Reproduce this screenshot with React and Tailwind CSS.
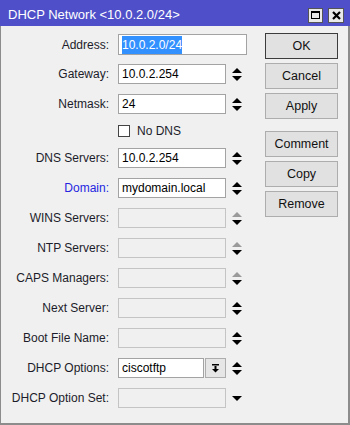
import React from 'react';

const UpDown = ({ up = 'on', down = 'on' }) => {
  const color = (s) => (s === 'dim' ? '#9a9a9a' : '#000');
  if (up && down) {
    return (
      <svg width="10" height="13" viewBox="0 0 10 13">
        <polygon points="0,5 5,0 10,5" fill={color(up)} />
        <polygon points="0,8 5,13 10,8" fill={color(down)} />
      </svg>
    );
  }
  if (up) {
    return (
      <svg width="10" height="5" viewBox="0 0 10 5">
        <polygon points="0,5 5,0 10,5" fill={color(up)} />
      </svg>
    );
  }
  return (
    <svg width="10" height="5" viewBox="0 0 10 5">
      <polygon points="0,0 5,5 10,0" fill={color(down)} />
    </svg>
  );
};

const fields = [
  { label: 'Gateway:', value: '10.0.2.254', up: 'on', down: 'on' },
  { label: 'Netmask:', value: '24', up: 'on' },
];

const lower = [
  { label: 'DNS Servers:', value: '10.0.2.254', up: 'on', down: 'on' },
  { label: 'Domain:', value: 'mydomain.local', up: 'on', blue: true },
  { label: 'WINS Servers:', disabled: true, up: 'dim', down: 'on' },
  { label: 'NTP Servers:', disabled: true, up: 'dim', down: 'on' },
  { label: 'CAPS Managers:', disabled: true, up: 'dim', down: 'on' },
  { label: 'Next Server:', disabled: true, down: 'on' },
  { label: 'Boot File Name:', disabled: true, down: 'on' },
];

const Label = ({ children, blue }) => (
  <div className={`w-[109px] text-right pr-[1px] ${blue ? 'text-[#2525e0]' : 'text-[#1c1c2a]'}`}>{children}</div>
);

const Row = ({ f }) => (
  <div className="flex items-center h-[20px] mb-[10px]">
    <Label blue={f.blue}>{f.label}</Label>
    <div
      className={`ml-[8px] w-[108px] h-[20px] border flex items-center px-[3px] ${
        f.disabled ? 'bg-[#f0f0f0] border-[#c4c4c4]' : 'bg-white border-[#a3a3a3]'
      }`}
    >
      {f.value}
    </div>
    <div className="ml-[6px] w-[10px] flex items-center justify-center">
      <UpDown up={f.up} down={f.down} />
    </div>
  </div>
);

const Btn = ({ children, primary, className = '' }) => (
  <button
    className={`w-[73px] h-[26px] bg-[#e1e1e1] border text-[12.5px] text-[#111] ${
      primary ? 'border-[#3c3c3c]' : 'border-[#adadad]'
    } ${className}`}
  >
    {children}
  </button>
);

export default function App() {
  return (
    <div className="w-[350px] h-[425px] flex flex-col text-[12px] font-['Liberation_Sans',Arial,sans-serif] bg-[#4f4fc9]">
      <div className="h-[26px] flex items-center pl-[8px] pr-[6px] pt-[4px] text-white">
        <span className="text-[13px]">DHCP Network &lt;10.0.2.0/24&gt;</span>
        <div className="ml-auto flex gap-[5px]">
          <div className="w-[15px] h-[15px] bg-[#eaeaea] border border-[#555] flex items-center justify-center">
            <div className="w-[9px] h-[8px] border border-black border-t-2" />
          </div>
          <div className="w-[16px] h-[15px] bg-[#eaeaea] border border-[#555] flex items-center justify-center">
            <svg width="9" height="9" viewBox="0 0 9 9">
              <path d="M1 1 L8 8 M8 1 L1 8" stroke="#000" strokeWidth="2.2" />
            </svg>
          </div>
        </div>
      </div>
      <div className="flex-1 bg-[#f0f0f0] border-l border-r-2 border-b-2 border-[#8c8c8c] flex pt-[7px]">
        <div className="flex flex-col pt-[1px]">
          <div className="flex items-center h-[21px] mb-[9px]">
            <Label>Address:</Label>
            <div className="ml-[8px] w-[129px] h-[21px] bg-white border border-[#a3a3a3] flex items-center px-[3px]">
              <span className="bg-[#3390ff] text-white">10.0.2.0/24</span>
            </div>
          </div>
          {fields.map((f) => (
            <Row key={f.label} f={f} />
          ))}
          <div className="flex items-center h-[14px] mb-[10px] text-[#1c1c2a]">
            <div className="ml-[117px] w-[12px] h-[12px] bg-white border border-[#444]" />
            <span className="ml-[7px]">No DNS</span>
          </div>
          {lower.map((f) => (
            <Row key={f.label} f={f} />
          ))}
          <div className="flex items-center h-[20px] mb-[10px]">
            <Label>DHCP Options:</Label>
            <div className="ml-[8px] w-[86px] h-[20px] bg-white border border-[#a3a3a3] flex items-center px-[3px]">
              ciscotftp
            </div>
            <div className="ml-[1px] w-[21px] h-[20px] bg-[#e6e6e6] border border-[#adadad] flex items-center justify-center">
              <svg width="9" height="9" viewBox="0 0 9 9">
                <rect x="1" y="0" width="7" height="1.5" fill="#000" />
                <rect x="3.5" y="2" width="2" height="3" fill="#000" />
                <polygon points="1,5 4.5,8.5 8,5" fill="#000" />
              </svg>
            </div>
            <div className="ml-[6px] w-[10px] flex items-center justify-center">
              <UpDown up="on" down="on" />
            </div>
          </div>
          <div className="flex items-center h-[20px]">
            <Label>DHCP Option Set:</Label>
            <div className="ml-[8px] w-[108px] h-[20px] bg-[#f0f0f0] border border-[#c4c4c4]" />
            <div className="ml-[6px] w-[10px] flex items-center justify-center">
              <UpDown up={null} down="on" />
            </div>
          </div>
        </div>
        <div className="ml-[18px] flex flex-col gap-[4px]">
          <Btn primary>OK</Btn>
          <Btn>Cancel</Btn>
          <Btn>Apply</Btn>
          <Btn className="mt-[8px]">Comment</Btn>
          <Btn>Copy</Btn>
          <Btn>Remove</Btn>
        </div>
      </div>
    </div>
  );
}
